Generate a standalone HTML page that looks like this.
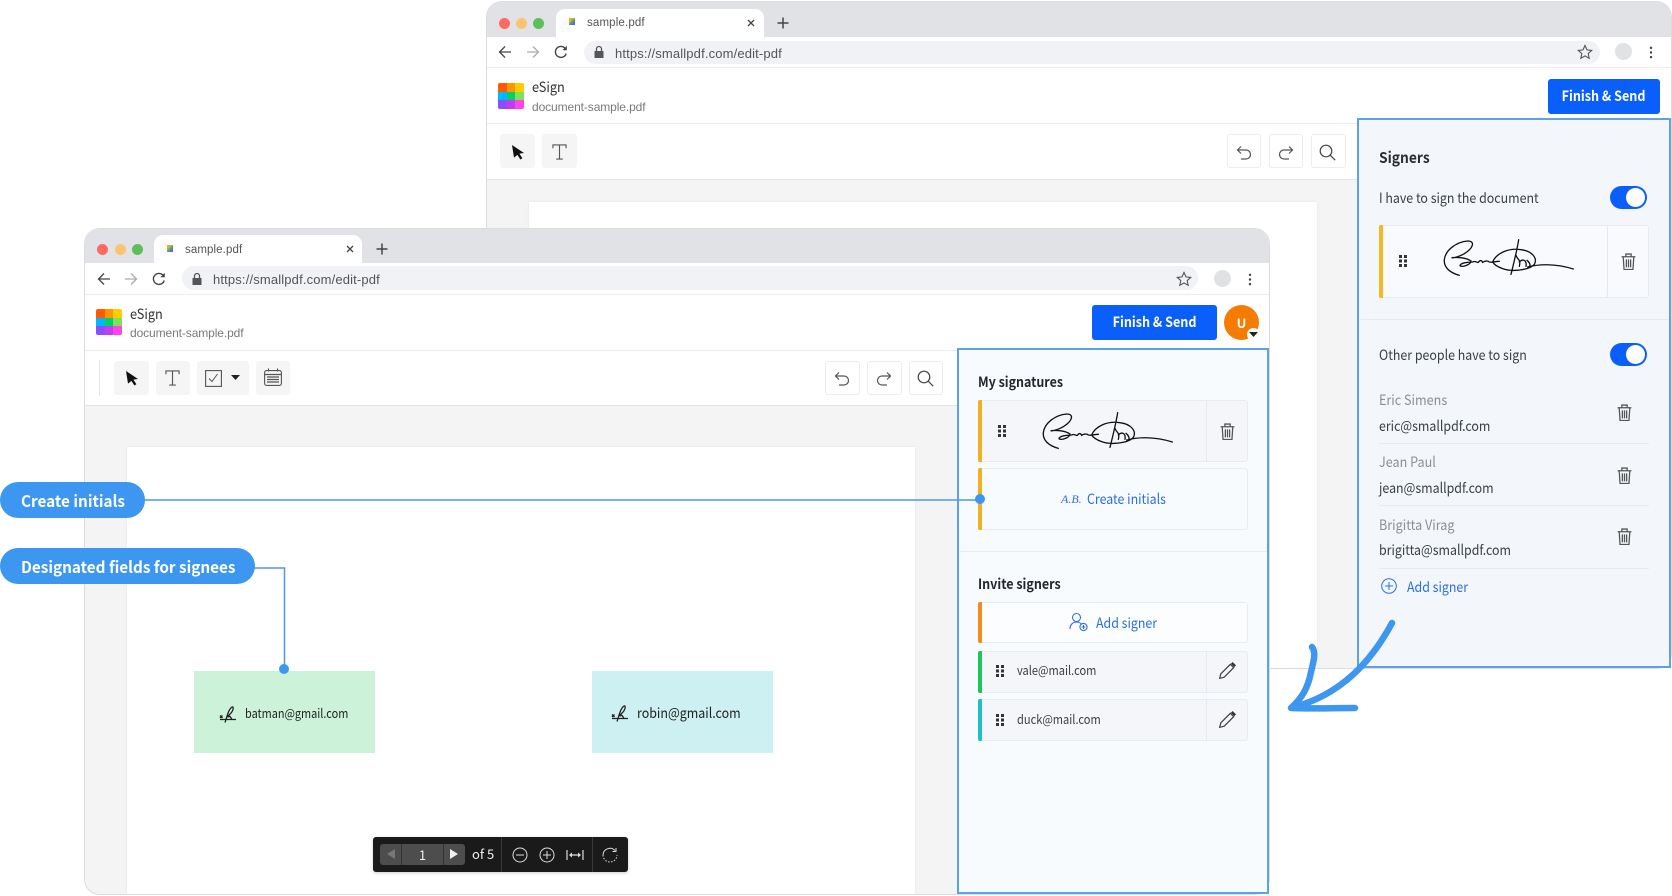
<!DOCTYPE html>
<html lang="en"><head><meta charset="utf-8"><title>eSign</title>
<style>
*{box-sizing:border-box}
html,body{margin:0;padding:0;background:#fff}
body{width:1672px;height:896px;position:relative;overflow:hidden;font-family:"Noto Sans CJK SC","Liberation Sans",sans-serif;color:#2b2f33}
.t{position:absolute;line-height:20px;white-space:nowrap}
.n{transform:scaleX(.885);transform-origin:0 50%}
.r{font-family:"Liberation Sans",sans-serif}
.a{position:absolute}
.win{position:absolute;width:1186px;background:#fff;border:1px solid #dcdcdc;border-radius:16px;overflow:hidden}
.bar{position:absolute;left:0;top:0;width:100%;height:35px;background:#e0e2e6}
.dot{position:absolute;top:15.5px;width:11px;height:11px;border-radius:50%}
.tab{position:absolute;left:69px;top:7px;width:208px;height:28px;background:#fff;border-radius:9px 9px 0 0}
.url{position:absolute;left:97px;top:39px;width:1016px;height:23px;border-radius:12px;background:#f0f2f5}
.hr{position:absolute;left:0;width:100%;height:1px;background:#ececec}
.logo{position:absolute;left:11px;top:81px;width:26px;height:26px;border-radius:2px;overflow:hidden;display:grid;grid-template-columns:1fr 1fr 1fr;grid-template-rows:1fr 1fr 1fr}
.fav{position:absolute;left:82px;top:16px;width:6px;height:7px;background:linear-gradient(135deg,#f5a623 0 35%,#2fc06a 50%,#7a4dff 85%)}
.gray{position:absolute;left:0;top:177px;width:100%;bottom:0;background:#f4f4f4;border-top:1px solid #e4e4e4}
.page{position:absolute;left:42px;top:200px;width:788px;bottom:-20px;background:#fff;box-shadow:0 0 2px #e4e4e4}
.btn{position:absolute;top:132px;height:34px;border-radius:3px}
.btn.f{background:#f5f5f5}
.btn.o{background:#fff;border:1px solid #ececec}
.fs{position:absolute;background:#0a5ffb;color:#fff;border-radius:3px;font-weight:700;font-size:14px;text-align:center}
.fs span{display:inline-block;transform:scaleX(.9);white-space:nowrap}
.panel{position:absolute;border:2px solid #5ba2e6}
.card{position:absolute;width:270px;border:1px solid #e8ecf1;border-radius:3px}
.bar4{position:absolute;left:-1px;top:-1px;bottom:-1px;width:4px;border-radius:2px 0 0 2px}
.dv{position:absolute;top:0;bottom:0;width:1px;background:#e6eaef}
.ic{position:absolute;overflow:visible}
.pill{position:absolute;left:0;background:#3d96f0;color:#fff;font-weight:700;font-size:16px;height:36px;border-radius:18px;line-height:37px;padding-left:21px;white-space:nowrap}
.pill span{display:inline-block;transform:scaleX(.955);transform-origin:0 50%}
</style></head><body>
<svg width="0" height="0" style="position:absolute">
<defs>
<symbol id="back" viewBox="0 0 16 16"><path d="M14 8H2.5M8 2.5L2.5 8 8 13.5" fill="none" stroke="currentColor" stroke-width="1.3"/></symbol>
<symbol id="reload" viewBox="0 0 16 16"><path d="M13.2 9.5A5.5 5.5 0 1 1 12 4.2" fill="none" stroke="#444" stroke-width="1.4"/><path d="M13.8 1.8v4.4H9.4z" fill="#444"/></symbol>
<symbol id="lock" viewBox="0 0 12 14"><path d="M1.5 6h9v7h-9z" fill="#555"/><path d="M3.5 6V4a2.5 2.5 0 0 1 5 0v2" fill="none" stroke="#555" stroke-width="1.3"/></symbol>
<symbol id="star" viewBox="0 0 16 16"><path d="M8 1.500l2 4.400 4.700.5-3.500 3.200 1 4.700L8 11.900l-4.200 2.400 1-4.700L1.300 6.400 6 5.900z" fill="none" stroke="#555" stroke-width="1.100"/></symbol>
<symbol id="kebab" viewBox="0 0 4 14"><circle cx="2" cy="2" r="1.3" fill="#444"/><circle cx="2" cy="7" r="1.3" fill="#444"/><circle cx="2" cy="12" r="1.3" fill="#444"/></symbol>
<symbol id="cursor" viewBox="0 0 14 16"><path d="M1 1l12 8-4.600.6 3 4.600-2 1.300-3-4.600L3 13.600z" fill="#111"/></symbol>
<symbol id="T" viewBox="0 0 16 18"><path d="M1 5V1.500h14V5M8 1.500V16.500M4.500 16.500h7" fill="none" stroke="#555" stroke-width="1.200"/></symbol>
<symbol id="undo" viewBox="0 0 16 16"><path d="M5 1.500L1.500 5 5 8.500M1.500 5H10a4 4 0 0 1 0 9H5" fill="none" stroke="#555" stroke-width="1.200"/></symbol>
<symbol id="redo" viewBox="0 0 16 16"><path d="M11 1.500L14.500 5 11 8.500M14.500 5H6a4 4 0 0 0 0 9h5" fill="none" stroke="#555" stroke-width="1.200"/></symbol>
<symbol id="search" viewBox="0 0 17 17"><circle cx="7" cy="7" r="5.800" fill="none" stroke="#444" stroke-width="1.200"/><path d="M11.200 11.200l5 5" stroke="#444" stroke-width="1.200"/></symbol>
<symbol id="trash" viewBox="0 0 14 16"><path d="M.5 3.500h13M4.500 3.500V1h5v2.500M2 3.500l.8 12h8.400l.8-12M5 6v7.500M7 6v7.500M9 6v7.500" fill="none" stroke="#555" stroke-width="1.200"/></symbol>
<symbol id="drag" viewBox="0 0 8 12"><path d="M0 0h3v3H0zM5 0h3v3H5zM0 4.500h3v3H0zM5 4.500h3v3H5zM0 9h3v3H0zM5 9h3v3H5z" fill="#333"/></symbol>
<symbol id="pencil" viewBox="0 0 16 16"><path d="M1.500 14.500l1-4L11 2l3 3-8.500 8.500z" fill="none" stroke="#444" stroke-width="1.100"/><path d="M11.500 1.500L13 0l3 3-1.500 1.500z" fill="#333"/></symbol>
<symbol id="sig" viewBox="0 0 600 210"><path d="M115 145C85 137 68 120 70 98C73 70 105 45 140 42C165 42 155 65 130 80C118 87 100 94 92 92C110 90 135 92 150 102C150 112 125 122 117 116C118 108 140 105 155 105C165 100 165 108 172 106C178 98 182 100 185 106C190 102 200 100 205 105C215 107 222 103 235 103M215 105C225 80 260 62 300 68C335 72 350 95 340 112C325 130 270 135 245 125C225 118 218 110 215 105M293 38C288 70 278 110 270 142M285 85C290 100 300 95 295 118M295 105C305 95 318 98 315 118M318 100C325 105 330 115 325 120M320 120C350 112 400 108 457 126" fill="none" stroke="#111" stroke-width="4" stroke-linecap="round"/></symbol>
<symbol id="signico" viewBox="0 0 18 18"><path d="M1 10.500l2.500 2.500M3.500 10.500L1 13M1 14.500h16M6 17.500C8 12 9 5 13 2c2-1 1.500 4-2 7-2 2-3 3.500-1 2.500s1 2.500 3 1.500" fill="none" stroke="#222" stroke-width="1.300"/></symbol>
</defs>
</svg>

<!-- BACK WINDOW -->
<div class="win" style="left:486px;top:1px;height:668px">
  <div class="bar"></div>
  <div class="dot" style="left:12px;background:#ff6b60"></div><div class="dot" style="left:29px;background:#fcc46e"></div><div class="dot" style="left:46px;background:#5cc05a"></div>
  <div class="tab"></div><div class="fav"></div>
  <div class="t r" style="left:100px;top:11px;font-size:11.5px;color:#555;letter-spacing:.15px">sample.pdf</div>
  <svg class="ic" style="left:258px;top:15px" width="12" height="12"><path d="M3 3l6 6M9 3l-6 6" stroke="#444" stroke-width="1.300"/></svg>
  <svg class="ic" style="left:289px;top:14px" width="14" height="14"><path d="M7 1.500v11M1.500 7h11" stroke="#444" stroke-width="1.500"/></svg>
  <svg class="ic" style="left:10px;top:42px;color:#444" width="16" height="16"><use href="#back"/></svg>
  <svg class="ic" style="left:38px;top:42px;color:#aaa;transform:scaleX(-1)" width="16" height="16"><use href="#back"/></svg>
  <svg class="ic" style="left:66px;top:42px" width="16" height="16"><use href="#reload"/></svg>
  <div class="url"></div>
  <svg class="ic" style="left:106px;top:43px" width="12" height="14"><use href="#lock"/></svg>
  <div class="t r" style="left:128px;top:42px;font-size:13px;color:#555;letter-spacing:.15px">https://smallpdf.com/edit-pdf</div>
  <svg class="ic" style="left:1090px;top:42px" width="16" height="16"><use href="#star"/></svg>
  <div class="a" style="left:1128px;top:41px;width:17px;height:17px;border-radius:50%;background:#e0e2e4"></div>
  <svg class="ic" style="left:1162px;top:44px" width="4" height="13"><use href="#kebab"/></svg>
  <div class="hr" style="top:65px"></div>
  <div class="logo"><i style="background:#ff5a00"></i><i style="background:#ff9500"></i><i style="background:#ffcc00"></i><i style="background:#00b8ff"></i><i style="background:#00d068"></i><i style="background:#7fe05a"></i><i style="background:#8a4dff"></i><i style="background:#c43cf0"></i><i style="background:#ff45e8"></i></div>
  <div class="t n" style="left:45px;top:75px;font-size:14px;color:#333;transform:scaleX(.91)">eSign</div>
  <div class="t r" style="left:45px;top:95px;font-size:12px;color:#7a7a7a;letter-spacing:-.1px">document-sample.pdf</div>
  <div class="hr" style="top:121px"></div>
  <div class="gray"></div><div class="page"></div>
  <div class="btn f" style="left:13px;width:35px"></div><div class="btn f" style="left:55px;width:35px"></div>
  <svg class="ic" style="left:24px;top:142px" width="14" height="16"><use href="#cursor"/></svg>
  <svg class="ic" style="left:65px;top:141px" width="15" height="18"><use href="#T"/></svg>
  <div class="btn o" style="left:740px;width:34px"></div><div class="btn o" style="left:782px;width:34px"></div><div class="btn o" style="left:824px;width:35px"></div>
  <svg class="ic" style="left:749px;top:143px" width="16" height="16"><use href="#undo"/></svg>
  <svg class="ic" style="left:791px;top:143px" width="16" height="16"><use href="#redo"/></svg>
  <svg class="ic" style="left:832px;top:142px" width="17" height="17"><use href="#search"/></svg>
  <div class="fs" style="left:1061px;top:77px;width:112px;height:35px;line-height:34px"><span>Finish &amp; Send</span></div>
</div>

<!-- BACK PANEL -->
<div class="panel" style="left:1357px;top:118px;width:314px;height:550px;background:#f3f7fb"></div>
<div class="a" style="left:1360px;top:319px;width:309px;height:1px;background:#e6ebf0"></div>
<div class="t n" style="left:1379px;top:148px;font-size:15px;font-weight:700;color:#2b2f33;transform:scaleX(.92)">Signers</div>
<div class="t n" style="left:1379px;top:188px;font-size:14px;color:#3a3f44">I have to sign the document</div>
<div class="a" style="left:1610px;top:186px;width:37px;height:23px;border-radius:12px;background:#0a5ffb"></div>
<div class="a" style="left:1626px;top:188px;width:19px;height:19px;border-radius:50%;background:#fff"></div>
<div class="card" style="left:1379px;top:225px;height:73px;background:#f8fafd"><div class="bar4" style="background:#f5b723"></div><div class="dv" style="left:227px"></div></div>
<svg class="ic" style="left:1399px;top:255px" width="8" height="12"><use href="#drag"/></svg>
<svg class="ic" style="left:1421px;top:227px" width="200" height="70"><use href="#sig"/></svg>
<svg class="ic" style="left:1621px;top:253px" width="15" height="17"><use href="#trash"/></svg>
<div class="t n" style="left:1379px;top:345px;font-size:14px;color:#3a3f44">Other people have to sign</div>
<div class="a" style="left:1610px;top:343px;width:37px;height:23px;border-radius:12px;background:#0a5ffb"></div>
<div class="a" style="left:1626px;top:345px;width:19px;height:19px;border-radius:50%;background:#fff"></div>
<div class="t n" style="left:1379px;top:390px;font-size:14px;color:#8b8f94;transform:scaleX(.9)">Eric Simens</div>
<div class="t n" style="left:1379px;top:416px;font-size:14px;color:#3a3f44">eric@smallpdf.com</div>
<svg class="ic" style="left:1617px;top:404px" width="15" height="17"><use href="#trash"/></svg>
<div class="a" style="left:1379px;top:443px;width:270px;height:1px;background:#e6ebf0"></div>
<div class="t n" style="left:1379px;top:452px;font-size:14px;color:#8b8f94;transform:scaleX(.9)">Jean Paul</div>
<div class="t n" style="left:1379px;top:478px;font-size:14px;color:#3a3f44">jean@smallpdf.com</div>
<svg class="ic" style="left:1617px;top:467px" width="15" height="17"><use href="#trash"/></svg>
<div class="a" style="left:1379px;top:505px;width:270px;height:1px;background:#e6ebf0"></div>
<div class="t n" style="left:1379px;top:515px;font-size:14px;color:#8b8f94;transform:scaleX(.9)">Brigitta Virag</div>
<div class="t n" style="left:1379px;top:540px;font-size:14px;color:#3a3f44">brigitta@smallpdf.com</div>
<svg class="ic" style="left:1617px;top:528px" width="15" height="17"><use href="#trash"/></svg>
<div class="a" style="left:1379px;top:568px;width:270px;height:1px;background:#e6ebf0"></div>
<svg class="ic" style="left:1381px;top:578px" width="16" height="16"><circle cx="8" cy="8" r="7.300" fill="none" stroke="#2c6fdf" stroke-width="1"/><path d="M8 4v8M4 8h8" stroke="#2c6fdf" stroke-width="1"/></svg>
<div class="t n" style="left:1407px;top:577px;font-size:14px;color:#2c6fdf">Add signer</div>

<!-- FRONT WINDOW -->
<div class="win" style="left:84px;top:228px;height:667px">
  <div class="bar" style="height:34px"></div>
  <div class="dot" style="left:12px;top:14.500px;background:#ff6b60"></div><div class="dot" style="left:30px;top:14.500px;background:#fcc46e"></div><div class="dot" style="left:47px;top:14.500px;background:#5cc05a"></div>
  <div class="tab" style="top:6px"></div><div class="fav"></div>
  <div class="t r" style="left:100px;top:11px;font-size:11.500px;color:#555;letter-spacing:.1px">sample.pdf</div>
  <svg class="ic" style="left:259px;top:14px" width="12" height="12"><path d="M3 3l6 6M9 3l-6 6" stroke="#444" stroke-width="1.300"/></svg>
  <svg class="ic" style="left:290px;top:13px" width="14" height="14"><path d="M7 1.500v11M1.500 7h11" stroke="#444" stroke-width="1.500"/></svg>
  <svg class="ic" style="left:11px;top:42px;color:#444" width="16" height="16"><use href="#back"/></svg>
  <svg class="ic" style="left:38px;top:42px;color:#aaa;transform:scaleX(-1)" width="16" height="16"><use href="#back"/></svg>
  <svg class="ic" style="left:66px;top:42px" width="16" height="16"><use href="#reload"/></svg>
  <div class="url" style="left:97px;top:37px;height:24px"></div>
  <svg class="ic" style="left:106px;top:43px" width="12" height="14"><use href="#lock"/></svg>
  <div class="t r" style="left:128px;top:41px;font-size:13px;color:#555;letter-spacing:.15px">https://smallpdf.com/edit-pdf</div>
  <svg class="ic" style="left:1091px;top:42px" width="16" height="16"><use href="#star"/></svg>
  <div class="a" style="left:1129px;top:41px;width:17px;height:17px;border-radius:50%;background:#e0e2e4"></div>
  <svg class="ic" style="left:1163px;top:44px" width="4" height="13"><use href="#kebab"/></svg>
  <div class="hr" style="top:65px"></div>
  <div class="logo" style="top:80px"><i style="background:#ff5a00"></i><i style="background:#ff9500"></i><i style="background:#ffcc00"></i><i style="background:#00b8ff"></i><i style="background:#00d068"></i><i style="background:#7fe05a"></i><i style="background:#8a4dff"></i><i style="background:#c43cf0"></i><i style="background:#ff45e8"></i></div>
  <div class="t n" style="left:45px;top:75px;font-size:14px;color:#333;transform:scaleX(.91)">eSign</div>
  <div class="t r" style="left:45px;top:94px;font-size:12px;color:#7a7a7a;letter-spacing:-.1px">document-sample.pdf</div>
  <div class="hr" style="top:121px"></div>
  <div class="gray" style="top:176px"></div><div class="page" style="left:42px;top:218px"></div>
  <div class="a" style="left:14px;top:131px;width:1px;height:36px;background:#e6e6e6"></div>
  <div class="btn f" style="left:29px;width:35px"></div><div class="btn f" style="left:71px;width:34px"></div><div class="btn f" style="left:112px;width:52px"></div><div class="btn f" style="left:171px;width:34px"></div>
  <svg class="ic" style="left:40px;top:141px" width="14" height="16"><use href="#cursor"/></svg>
  <svg class="ic" style="left:80px;top:140px" width="15" height="18"><use href="#T"/></svg>
  <svg class="ic" style="left:120px;top:141px" width="17" height="17"><rect x=".6" y=".6" width="15.800" height="15.800" fill="none" stroke="#555" stroke-width="1.100"/><path d="M4 8.500l3 3 5.500-7.500" fill="none" stroke="#555" stroke-width="1"/></svg>
  <svg class="ic" style="left:146px;top:146px" width="9" height="6"><path d="M0 0h9L4.500 5z" fill="#222"/></svg>
  <svg class="ic" style="left:179px;top:139px" width="18" height="18"><rect x=".6" y="2.600" width="16.800" height="14.800" rx="2" fill="none" stroke="#555" stroke-width="1.100"/><path d="M1 6.500h16M4.500.5v3M13.500.5v3M3 9h12M3 11.500h12M3 14h12" stroke="#555" fill="none" stroke-width="1.200"/></svg>
  <div class="btn o" style="left:740px;width:35px"></div><div class="btn o" style="left:782px;width:35px"></div><div class="btn o" style="left:824px;width:34px"></div>
  <svg class="ic" style="left:749px;top:142px" width="16" height="16"><use href="#undo"/></svg>
  <svg class="ic" style="left:791px;top:142px" width="16" height="16"><use href="#redo"/></svg>
  <svg class="ic" style="left:832px;top:141px" width="17" height="17"><use href="#search"/></svg>
  <div class="fs" style="left:1007px;top:76px;width:125px;height:35px;line-height:35px"><span>Finish &amp; Send</span></div>
  <div class="a" style="left:1139px;top:76px;width:35px;height:35px;border-radius:50%;background:#f57c00;color:#fff;font-weight:700;font-size:13px;text-align:center;line-height:35px">U</div>
  <div class="a" style="left:1162px;top:99px;width:13px;height:13px;border-radius:50%;background:#fff"></div>
  <svg class="ic" style="left:1164px;top:103px" width="9" height="6"><path d="M0 0h9L4.500 5z" fill="#222"/></svg>
</div>

<!-- FRONT PANEL -->
<div class="panel" style="left:957px;top:348px;width:312px;height:546px;background:#f7fbfe"></div>
<div class="a" style="left:960px;top:551px;width:307px;height:1px;background:#e9edf1"></div>
<div class="t n" style="left:978px;top:372px;font-size:14px;font-weight:700;color:#23272b;transform:scaleX(.89)">My signatures</div>
<div class="card" style="left:978px;top:400px;height:62px;background:#f4f6f9"><div class="bar4" style="background:#f0b020"></div><div class="dv" style="left:227px"></div></div>
<svg class="ic" style="left:998px;top:425px" width="8" height="12"><use href="#drag"/></svg>
<svg class="ic" style="left:1020px;top:400px" width="200" height="70"><use href="#sig"/></svg>
<svg class="ic" style="left:1220px;top:423px" width="15" height="17"><use href="#trash"/></svg>
<div class="card" style="left:978px;top:468px;height:62px;background:#f8fbfe"><div class="bar4" style="background:#f0b020"></div></div>
<div class="t" style="left:1061px;top:489px;font-size:12px;font-style:italic;font-family:'Liberation Serif',serif;color:#2c6fdf">A.B.</div>
<div class="t n" style="left:1087px;top:489px;font-size:14px;color:#2c6fdf">Create initials</div>
<div class="t n" style="left:978px;top:574px;font-size:14px;font-weight:700;color:#23272b;transform:scaleX(.895)">Invite signers</div>
<div class="card" style="left:978px;top:602px;height:41px;background:#fbfdff"><div class="bar4" style="background:#f58a1f"></div></div>
<svg class="ic" style="left:1069px;top:612px" width="19" height="20"><circle cx="7.500" cy="5.500" r="4" fill="none" stroke="#2c6fdf" stroke-width="1.100"/><path d="M1 17c0-4.500 3-7 6.500-7 2 0 3.500.7 4.500 1.800" fill="none" stroke="#2c6fdf" stroke-width="1.100"/><circle cx="14.500" cy="15" r="3.600" fill="none" stroke="#2c6fdf" stroke-width="1.100"/><path d="M14.500 13v4M12.500 15h4" stroke="#2c6fdf" stroke-width="1"/></svg>
<div class="t n" style="left:1096px;top:613px;font-size:14px;color:#2c6fdf">Add signer</div>
<div class="card" style="left:978px;top:651px;height:42px;background:#f4f6f9"><div class="bar4" style="background:#1dc45f"></div><div class="dv" style="left:227px"></div></div>
<svg class="ic" style="left:996px;top:665px" width="8" height="12"><use href="#drag"/></svg>
<div class="t n" style="left:1017px;top:660px;font-size:12.500px;color:#3a3f44">vale@mail.com</div>
<svg class="ic" style="left:1218px;top:662px" width="18" height="18"><use href="#pencil"/></svg>
<div class="card" style="left:978px;top:699px;height:42px;background:#f4f6f9"><div class="bar4" style="background:#1fc0c8"></div><div class="dv" style="left:227px"></div></div>
<svg class="ic" style="left:996px;top:714px" width="8" height="12"><use href="#drag"/></svg>
<div class="t n" style="left:1017px;top:709px;font-size:12.500px;color:#3a3f44">duck@mail.com</div>
<svg class="ic" style="left:1218px;top:711px" width="18" height="18"><use href="#pencil"/></svg>

<!-- Fields on the page -->
<div class="a" style="left:194px;top:671px;width:181px;height:82px;background:#ccf3da"></div>
<svg class="ic" style="left:219px;top:705px" width="18" height="18"><use href="#signico"/></svg>
<div class="t n" style="left:245px;top:703px;font-size:12.500px;color:#222;transform:scaleX(.873)">batman@gmail.com</div>
<div class="a" style="left:592px;top:671px;width:181px;height:82px;background:#cdf0f3"></div>
<svg class="ic" style="left:611px;top:704px" width="18" height="18"><use href="#signico"/></svg>
<div class="t n" style="left:637px;top:703px;font-size:14px;color:#222;transform:scaleX(.889)">robin@gmail.com</div>

<!-- Pager -->
<div class="a" style="left:373px;top:837px;width:255px;height:35px;background:#1a1a1a;border-radius:3px;box-shadow:0 1px 3px rgba(0,0,0,.2)"></div>
<div class="a" style="left:380px;top:844px;width:85px;height:21px;background:#4d4d4d;border-radius:3px"></div>
<div class="a" style="left:401px;top:844px;width:1px;height:21px;background:#333"></div>
<div class="a" style="left:443px;top:844px;width:1px;height:21px;background:#333"></div>
<svg class="ic" style="left:386px;top:849px" width="9" height="11"><path d="M9 0v10L1 5z" fill="#777"/></svg>
<svg class="ic" style="left:450px;top:849px" width="9" height="11"><path d="M0 0v10l8-5z" fill="#f2f2f2"/></svg>
<div class="t" style="left:402px;top:845px;width:41px;text-align:center;font-size:13px;color:#eee">1</div>
<div class="t" style="left:472px;top:844px;font-size:13px;color:#eee">of 5</div>
<div class="a" style="left:501px;top:837px;width:1px;height:35px;background:#3a3a3a"></div>
<div class="a" style="left:592px;top:837px;width:1px;height:35px;background:#3a3a3a"></div>
<svg class="ic" style="left:512px;top:847px" width="16" height="16"><circle cx="8" cy="8" r="7" fill="none" stroke="#ddd" stroke-width="1"/><path d="M4 8h8" stroke="#ddd" stroke-width="1"/></svg>
<svg class="ic" style="left:539px;top:847px" width="16" height="16"><circle cx="8" cy="8" r="7" fill="none" stroke="#ddd" stroke-width="1"/><path d="M4 8h8M8 4v8" stroke="#ddd" stroke-width="1"/></svg>
<svg class="ic" style="left:566px;top:848px" width="18" height="14"><path d="M1 2v10M17 2v10M3.500 7h11" stroke="#ddd" stroke-width="1.200"/><path d="M3 7l3-2.500v5zM15 7l-3-2.500v5z" fill="#ddd"/></svg>
<svg class="ic" style="left:602px;top:847px" width="16" height="16"><path d="M1 8A7 7 0 0 1 13 3.500" fill="none" stroke="#ddd" stroke-width="1"/><path d="M1 8A7 7 0 1 0 15 8" fill="none" stroke="#ddd" stroke-width="1" stroke-dasharray="1.500 1.500"/><path d="M14 1v3.500h-3.500" fill="none" stroke="#ddd" stroke-width="1"/></svg>

<!-- Callouts -->
<svg class="ic" style="left:0;top:0;pointer-events:none" width="1672" height="896">
<path d="M140 500H979" stroke="#4a99ea" stroke-width="1.500" fill="none"/>
<circle cx="980" cy="499" r="5" fill="#3d96f0"/>
<path d="M250 568H284.500V669" stroke="#4a99ea" stroke-width="1.500" fill="none"/>
<circle cx="284" cy="669" r="5" fill="#3d96f0"/>
<path d="M1392 623C1372 660 1342 695 1291 708M1312 647C1316 652 1314 660 1311 672C1308 688 1302 698 1291 708C1310 709 1330 708 1355 708" fill="none" stroke="#3d96f0" stroke-width="6.500" stroke-linecap="round" stroke-linejoin="round"/>
</svg>
<div class="pill" style="top:482px;width:145px"><span>Create initials</span></div>
<div class="pill" style="top:548px;width:255px"><span>Designated fields for signees</span></div>
</body></html>
